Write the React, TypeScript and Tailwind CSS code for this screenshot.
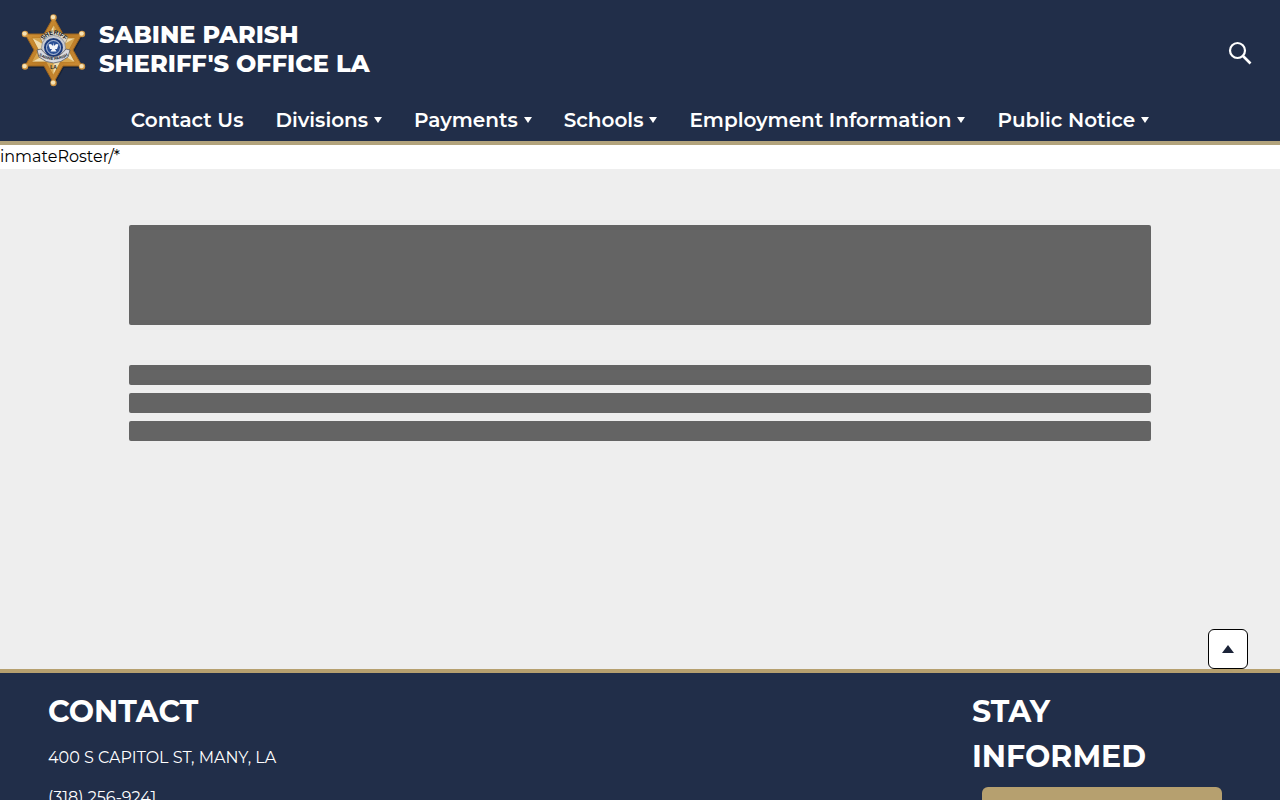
import React from "react";

const navItems = [
  { label: "Contact Us", menu: false },
  { label: "Divisions", menu: true },
  { label: "Payments", menu: true },
  { label: "Schools", menu: true },
  { label: "Employment Information", menu: true },
  { label: "Public Notice", menu: true },
];

// Outer tips of the six pointed star
const tips = [
  [43.5, 12.5],
  [72, 29],
  [72, 61.5],
  [43.5, 78],
  [15, 61.5],
  [15, 29],
];

function SheriffBadge() {
  return (
    <svg viewBox="0 0 89 90" className="h-[90px] w-[89px] shrink-0" role="img" aria-label="Sheriff badge">
      <defs>
        <linearGradient id="gold" x1="0" y1="0" x2="1" y2="1">
          <stop offset="0" stopColor="#d9993a" />
          <stop offset="0.5" stopColor="#b97a26" />
          <stop offset="1" stopColor="#d2923a" />
        </linearGradient>
        <path id="arcTop" d="M31.5 37 Q43.5 22 56.5 37" />
        <path id="arcBottom" d="M28 50 Q43.5 60 59 50" />
      </defs>
      <path
        d="M43.5 12 L53 29 L72 29 L63 45 L72 61 L53 61 L43.5 78 L34 61 L15 61 L24 45 L15 29 L34 29 Z"
        fill="#111a2c"
        transform="translate(1 2)"
        opacity="0.6"
      />
      <path
        d="M43.5 12 L53 29 L72 29 L63 45 L72 61 L53 61 L43.5 78 L34 61 L15 61 L24 45 L15 29 L34 29 Z"
        fill="url(#gold)"
        stroke="#9c641f"
        strokeWidth="1"
      />
      <path
        d="M43.5 20 L50.5 33 L65 33 L58.5 45 L65 57 L50.5 57 L43.5 70 L36.5 57 L22 57 L28.5 45 L22 33 L36.5 33 Z"
        fill="#efdcae"
        stroke="#b87820"
        strokeWidth="0.8"
      />
      <path
        d="M43.5 20 L43.5 45 L50.5 33 Z M65 33 L43.5 45 L58.5 45 Z M65 57 L43.5 45 L50.5 57 Z M43.5 70 L43.5 45 L36.5 57 Z M22 57 L43.5 45 L28.5 45 Z M22 33 L43.5 45 L36.5 33 Z"
        fill="#d6a54f"
      />
      {tips.map(([x, y]) => (
        <g key={`${x}-${y}`}>
          <circle cx={x} cy={y} r="3.2" fill="#cf9440" />
          <circle cx={x - 0.4} cy={y - 0.4} r="2.2" fill="#f6e2b4" />
        </g>
      ))}
      <path d="M30 32 Q43.5 20 58 32 L55 39 Q43.5 27 33 39 Z" fill="#dcd6c8" stroke="#8b6a35" strokeWidth="0.5" />
      <circle cx="43.5" cy="42.5" r="12" fill="#c9cbd1" stroke="#777b84" strokeWidth="0.6" />
      <circle cx="43.5" cy="42.5" r="9.5" fill="#1c3a7a" />
      <circle cx="43.5" cy="42.5" r="7" fill="#2d5296" stroke="#dbe3ef" strokeWidth="0.8" />
      <path
        d="M38.5 39.5 Q41 38 43 41 L43.5 37.5 L44 41 Q46 38 48.5 39.5 L47 44 L45 44 L46.5 46.5 L40.5 46.5 L42 44 L40 44 Z"
        fill="#f4f6fa"
      />
      <path
        d="M27 45 L31 44 Q43.5 60 56 44 L60 45 L58 52 Q43.5 64 29 52 Z"
        fill="#d9dbe0"
        stroke="#4b4b50"
        strokeWidth="0.7"
      />
      <g fill="#16181f" fontFamily="Liberation Sans, sans-serif" fontWeight="700" textAnchor="middle">
        <text fontSize="6">
          <textPath href="#arcTop" startOffset="50%">SHERIFF</textPath>
        </text>
        <text fontSize="4">
          <textPath href="#arcBottom" startOffset="50%">SABINE PARISH</textPath>
        </text>
        <text x="43.5" y="63.5" fontSize="5">LA</text>
      </g>
    </svg>
  );
}

function Header() {
  return (
    <header className="border-b-4 border-[#b2a37c] bg-[#212e49] text-white">
      <div className="flex items-center justify-between pt-[5px] pr-7 pl-[10px]">
        <a href="#" className="flex items-center">
          <SheriffBadge />
          <span className="pb-[3px] text-2xl leading-[29px] font-extrabold">
            SABINE PARISH
            <br />
            SHERIFF'S OFFICE LA
          </span>
        </a>
        <button type="button" aria-label="Search" className="mt-[6px]">
          <svg viewBox="0 0 24 24" className="size-6" fill="none" stroke="currentColor">
            <circle cx="9.5" cy="9.5" r="7.5" strokeWidth="2.2" />
            <path d="M15 15 L22.5 22.5" strokeWidth="2.6" />
          </svg>
        </button>
      </div>
      <nav className="flex h-[46px] items-center justify-center gap-8 pt-1 text-xl font-semibold">
        {navItems.map((item) =>
          item.menu ? (
            <button key={item.label} type="button" className="flex items-center gap-[6px] whitespace-nowrap">
              {item.label}
              <svg viewBox="0 0 8 6" className="h-[6px] w-2" fill="currentColor">
                <path d="M0 0 H8 L4 6 Z" />
              </svg>
            </button>
          ) : (
            <a key={item.label} href="#" className="whitespace-nowrap">
              {item.label}
            </a>
          )
        )}
      </nav>
    </header>
  );
}

function Footer() {
  return (
    <footer className="flex justify-between border-t-4 border-[#b6a06f] bg-[#212e49] px-12 pt-4 pb-8 text-white">
      <section>
        <h2 className="text-3xl leading-[45px] font-bold">CONTACT</h2>
        <p className="mt-3 leading-6">400 S CAPITOL ST, MANY, LA</p>
        <p className="mt-4 leading-6">(318) 256-9241</p>
      </section>
      <section className="w-[260px]">
        <h2 className="text-3xl leading-[45px] font-bold">
          STAY
          <br />
          INFORMED
        </h2>
        <button type="button" aria-label="Stay informed" className="mt-2 ml-[10px] h-12 w-60 rounded-md bg-[#b6a06f]" />
      </section>
    </footer>
  );
}

export default function App() {
  return (
    <div className="bg-white font-[Montserrat,Inter,sans-serif] text-base text-black">
      <Header />
      <p className="leading-6">inmateRoster/*</p>
      <main className="flex min-h-[500px] flex-col justify-between bg-[#eeeeee] pt-14">
        <div className="mx-auto w-4/5 px-px">
          <div className="mb-10 h-[100px] rounded-xs bg-[#646464]" />
          <div className="flex flex-col gap-2">
            <div className="h-5 rounded-xs bg-[#646464]" />
            <div className="h-5 rounded-xs bg-[#646464]" />
            <div className="h-5 rounded-xs bg-[#646464]" />
          </div>
        </div>
        <button
          type="button"
          aria-label="Back to top"
          className="mr-8 flex size-10 items-center justify-center self-end rounded-md border border-black bg-white text-[#1b2338]"
        >
          <svg viewBox="0 0 12 8" className="h-2 w-3" fill="currentColor">
            <path d="M6 0 L12 8 H0 Z" />
          </svg>
        </button>
      </main>
      <Footer />
    </div>
  );
}
